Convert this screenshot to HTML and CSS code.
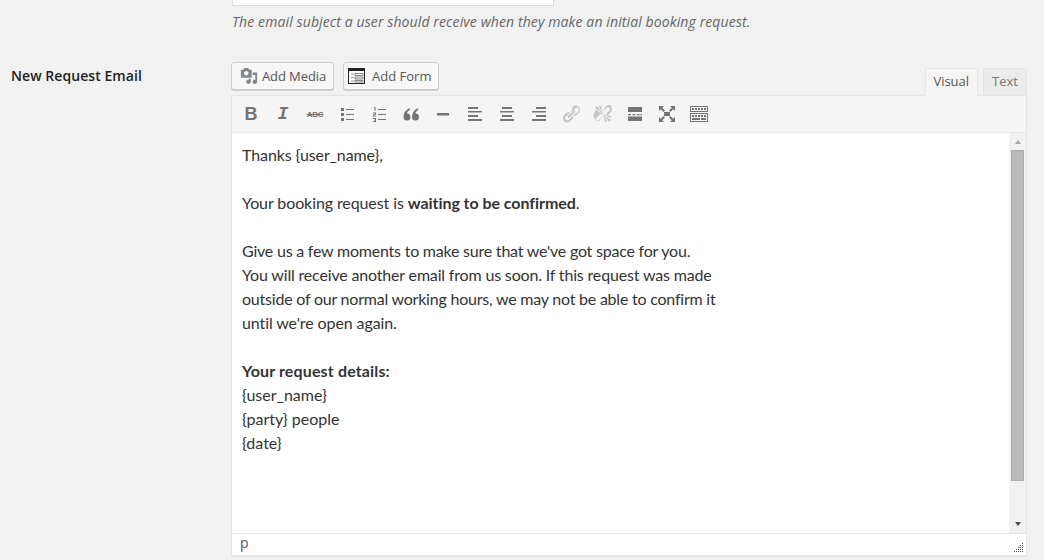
FILE: index.html
```html
<!DOCTYPE html>
<html lang="en">
<head>
<meta charset="utf-8">
<title>Booking settings</title>
<link rel="stylesheet" href="styles.css">
</head>
<body>
<div class="form">
  <div class="subject-field">
    <div class="subject-input"></div>
    <p class="description">The email subject a user should receive when they make an initial booking request.</p>
  </div>
  <div class="row">
    <div class="label">New Request Email</div>
    <div class="wrap">
      <div class="editor-head">
        <div class="media-buttons">
          <button class="button"><svg class="btn-icon" width="18" height="18" viewBox="0 0 20 20"><path fill-rule="evenodd" d="M13 11V4c0-.55-.45-1-1-1h-1.670L9 1H5L3.670 3H2c-.55 0-1 .45-1 1v7c0 .55.45 1 1 1h10c.55 0 1-.45 1-1zM7 4.500c1.380 0 2.500 1.120 2.500 2.500S8.380 9.500 7 9.500 4.500 8.380 4.500 7 5.620 4.500 7 4.500zM14 6h5v10.500c0 1.380-1.120 2.500-2.500 2.500S14 17.880 14 16.500s1.120-2.500 2.500-2.500c.17 0 .34.020.5.050V9h-3V6zm-4 8.050V13h2v3.500c0 1.380-1.120 2.500-2.500 2.500S7 17.880 7 16.500 8.120 14 9.500 14c.17 0 .34.020.5.050z"/></svg><span class="media-text">Add Media</span></button>
          <button class="button button-form"><svg class="form-icon" width="18" height="18" viewBox="0 0 18 18"><rect x="0.500" y="1.500" width="16" height="15" fill="#fafafa" stroke="#222"/><rect x="1" y="2" width="15" height="2" fill="#222"/><path d="M7 6.500h8v2H7zM7 10h8v2H7zM7 13.500h8v1.500H7z" fill="#fff" stroke="#555" stroke-width=".7"/><path d="M3 7h3M3 10.500h3M3 14h3" stroke="#999"/></svg><span>Add Form</span></button>
        </div>
        <div class="tabs">
          <div class="tab tab-active">Visual</div>
          <div class="tab">Text</div>
        </div>
      </div>
      <div class="editor">
        <div class="toolbar">
          <span class="tool tool-b">B</span>
          <span class="tool tool-i">I</span>
          <span class="tool tool-abc">ABC</span>
          <span class="tool"><svg class="ico" width="20" height="20" viewBox="0 0 20 20"><path d="M4 4h3v3H4zM4 9h3v3H4zM4 14h3v3H4zM9 5h8v1H9zM9 10h8v1H9zM9 15h8v1H9z"/></svg></span>
          <span class="tool"><svg class="ico" width="20" height="20" viewBox="0 0 20 20"><path d="M5 3h1.500v4h-1V4H5zM4 8.500h3v2.300H5v.700h2v1H4v-2.200h2v-.800H4zM4 14h3v4H4v-1h2v-.500H5v-.800h1V15H4zM9 5h8v1H9zM9 10h8v1H9zM9 15h8v1H9z"/></svg></span>
          <span class="tool"><svg class="ico" width="20" height="20" viewBox="0 0 20 20"><path d="M9.500 13a3.500 3.500 0 1 1-7 0C2.500 9 4.500 6 8.500 4.200L9 5.800C7 7 6 8.200 6 9.600A3.500 3.500 0 0 1 9.500 13zM18 13a3.500 3.500 0 1 1-7 0c0-4 2-7 6-8.800l.5 1.600c-2 1.200-3 2.400-3 3.800A3.500 3.500 0 0 1 18 13z"/></svg></span>
          <span class="tool"><svg class="ico" width="20" height="20" viewBox="0 0 20 20"><rect x="4" y="9" width="12" height="2.500"/></svg></span>
          <span class="tool"><svg class="ico" width="20" height="20" viewBox="0 0 20 20"><path d="M3 3h10v2H3zM3 7h14v1.500H3zM3 11h10v2H3zM3 15h14v2H3z"/></svg></span>
          <span class="tool"><svg class="ico" width="20" height="20" viewBox="0 0 20 20"><path d="M5 3h10v2H5zM3 7h14v1.500H3zM5 11h10v2H5zM3 15h14v2H3z"/></svg></span>
          <span class="tool"><svg class="ico" width="20" height="20" viewBox="0 0 20 20"><path d="M7 3h10v2H7zM3 7h14v1.500H3zM7 11h10v2H7zM3 15h14v2H3z"/></svg></span>
          <span class="tool"><svg class="ico-off" width="20" height="20" viewBox="0 0 20 20"><path d="M17.740 2.760c1.680 1.690 1.680 4.410 0 6.100l-1.530 1.520c-1.120 1.120-2.700 1.490-4.130 1.120l2.060-2.060c.34.030.68-.01.98-.14.3-.13.57-.3.79-.52l.76-.77.76-.76c.84-.84.84-2.200 0-3.040-.84-.85-2.200-.85-3.040 0l-.77.76-.76.76c-.22.23-.39.5-.52.8-.13.3-.17.64-.14.97l-2.060 2.060c-.37-1.420 0-3 1.120-4.130L11.640 2.760c1.690-1.680 4.410-1.680 6.100 0zM8.590 13.430l5.340-5.340c.42-.42.420-1.100 0-1.520-.44-.43-1.130-.39-1.530 0l-5.330 5.340c-.42.420-.42 1.100 0 1.520.44.430 1.130.39 1.520 0zm-.76 2.290l4.140-4.140c.38 1.430 0 3-1.120 4.140l-1.520 1.520c-1.690 1.690-4.410 1.690-6.100 0-1.690-1.680-1.690-4.400 0-6.100l1.520-1.520c1.130-1.120 2.700-1.490 4.140-1.120l-4.140 4.140c-.84.84-.84 2.200 0 3.040.84.84 2.200.84 3.040 0z"/></svg></span>
          <span class="tool"><svg class="ico-off" width="20" height="20" viewBox="0 0 20 20"><path d="M17.740 2.260c1.680 1.690 1.680 4.410 0 6.100l-1.530 1.520c-.32.33-.69.58-1.080.77L13 10l1.690-1.640.76-.77.76-.76c.84-.84.84-2.200 0-3.040-.84-.85-2.200-.85-3.040 0l-.77.76-.76.76L11 7l-.12-2.130c.19-.38.44-.76.77-1.080l1.520-1.530c1.690-1.680 4.410-1.680 6.100 0zM2 4l8 6-6-8zm4-2l4 8-2-8H6zM2 6l8 4-8-2V6zm7.360 7.690L10 10l.12 2.130c-.19.38-.44.76-.77 1.080l-1.520 1.530c-1.690 1.680-4.410 1.680-6.100 0-1.680-1.690-1.680-4.410 0-6.100l1.530-1.520c.32-.33.69-.58 1.080-.77L7 10l-1.690 1.640-.76.77-.76.76c-.84.84-.84 2.200 0 3.040.84.85 2.200.85 3.040 0zM18 16l-8-6 6 8zm-4 2l-4-8 2 8h2zm4-4l-8-4 8 2v2z"/></svg></span>
          <span class="tool"><svg class="ico" width="20" height="20" viewBox="0 0 20 20"><path d="M3 3h14v5H3zM3 10h3v1.200H3zM7.500 10h3v1.200h-3zM12 10h2.500v1.200H12zM15.500 10H17v1.200h-1.500zM3 12.500h14V17H3z"/></svg></span>
          <span class="tool"><svg class="ico" width="20" height="20" viewBox="0 0 20 20"><path d="M7 2H2v5l1.800-1.800L6.500 8 8 6.500 5.200 3.800 7 2zm6 0l1.800 1.800L12 6.500 13.500 8l2.700-2.800L18 7V2h-5zm.5 10L12 13.500l2.700 2.700L13 18h5v-5l-1.800 1.800-2.700-2.800zm-7 0l-2.700 2.700L2 13v5h5l-1.800-1.800L8 13.500 6.500 12z"/><rect x="7" y="8" width="6" height="4"/></svg></span>
          <span class="tool"><svg class="ico" width="20" height="20" viewBox="0 0 20 20"><path fill-rule="evenodd" d="M1 2h18v6H1zM2 3v4h16V3zM1 9h18v9H1zM2 10v7h16v-7z"/><path d="M3 4h2v2H3zM6 4h2v2H6zM9 4h2v2H9zM12 4h2v2h-2zM15 4h2v2h-2zM3 11h2v2H3zM6 11h2v2H6zM9 11h2v2H9zM12 11h2v2h-2zM15 11h2v2h-2zM3 14h8v2H3zM12 14h5v2h-5z"/></svg></span>
        </div>
        <div class="content-area">
          <div class="content">
            <p class="snug">Thanks {user_name},</p>
            <p class="snug">Your booking request is <strong class="strong-inline">waiting to be confirmed</strong>.</p>
            <p><span class="tight">Give us a few moments to make sure that we've got space for you.</span><br><span class="close">You will receive another email from us soon. If this request was made</span><br><span class="tight">outside of our normal working hours, we may not be able to confirm it</span><br><span class="snug">until we're open again.</span></p>
            <p><strong class="strong-wide">Your request details:</strong><br>{user_name}<br>{party} people<br>{date}</p>
          </div>
          <div class="scrollbar">
            <div class="arrow arrow-up"></div>
            <div class="thumb"></div>
            <div class="arrow arrow-down"></div>
          </div>
        </div>
        <div class="statusbar">
          <span>p</span>
          <svg class="grip" width="9" height="9" viewBox="0 0 9 9"><path d="M8 0h1v1H8zM8 2h1v1H8zM6 2h1v1H6zM8 4h1v1H8zM6 4h1v1H6zM4 4h1v1H4zM8 6h1v1H8zM6 6h1v1H6zM4 6h1v1H4zM2 6h1v1H2zM8 8h1v1H8zM6 8h1v1H6zM4 8h1v1H4zM2 8h1v1H2zM0 8h1v1H0z"/></svg>
        </div>
      </div>
    </div>
  </div>
</div>
</body>
</html>
```

FILE: styles.css
```css
* {
  box-sizing: border-box;
}

html,
body {
  margin: 0;
  height: 560px;
  overflow: hidden;
  background: #f1f1f1;
}

body {
  font-family: "Open Sans", sans-serif;
  color: #444;
}

.subject-field {
  margin-left: 232px;
}

.subject-input {
  width: 322px;
  height: 6px;
  background: #fff;
  border: 1px solid #ddd;
  border-top: 0;
}

.description {
  margin: 6px 0 0;
  font-size: 14px;
  line-height: 20px;
  font-style: italic;
  letter-spacing: 0.11px;
  color: #666;
}

.row {
  display: grid;
  grid-template-columns: 231px 796px;
  margin-top: 30px;
}

.label {
  padding: 4px 0 0 11px;
  font-size: 14px;
  line-height: 20px;
  font-weight: 600;
  letter-spacing: 0.06px;
  color: #222;
}

.editor-head {
  display: flex;
  justify-content: space-between;
  height: 33px;
}

.media-buttons {
  display: flex;
  gap: 9px;
}

.button {
  display: flex;
  align-items: center;
  gap: 4px;
  height: 28px;
  padding: 0 7px 0 8px;
  font: 13px/26px "Open Sans", sans-serif;
  color: #555;
  background: #f7f7f7;
  border: 1px solid #ccc;
  border-radius: 3px;
  box-shadow: 0 1px 0 #ccc;
}

.media-text {
  letter-spacing: -0.1px;
}

.button-form {
  gap: 6px;
  padding: 0 7px 0 4px;
}

.btn-icon {
  fill: #82878c;
}

.tabs {
  display: flex;
  gap: 5px;
  margin-top: 6px;
}

.tab {
  height: 28px;
  padding: 0 8px;
  font-size: 13px;
  line-height: 25px;
  color: #777;
  background: #ebebeb;
  border: 1px solid #e5e5e5;
  position: relative;
}

.tab-active {
  padding-left: 7px;
  color: #555;
  background: #f5f5f5;
  border-bottom-color: #f5f5f5;
}

.editor {
  background: #fff;
  border: 1px solid #e5e5e5;
  box-shadow: 0 1px 1px rgba(0, 0, 0, 0.04);
}

.toolbar {
  display: flex;
  height: 37px;
  padding-left: 3px;
  background: #f5f5f5;
  border-bottom: 1px solid #e5e5e5;
}

.tool {
  display: flex;
  flex: 0 0 32px;
  justify-content: center;
  align-items: center;
  height: 36px;
  color: #747474;
}

.tool-b {
  font: 700 18px "Liberation Sans", sans-serif;
}

.tool-i {
  font: italic 700 18px "Liberation Mono", monospace;
}

.tool-abc {
  font: 700 8px "Liberation Sans", sans-serif;
  letter-spacing: -0.3px;
  text-decoration: line-through;
}

.ico {
  fill: #747474;
}

.ico-off {
  fill: #c4c4c4;
}

.content-area {
  display: flex;
  height: 400px;
}

.content {
  flex: 1;
  padding: 10px;
  font-family: "Lato", sans-serif;
  font-size: 16px;
  line-height: 24px;
  color: #333;
}

.content p {
  margin: 0 0 24px;
}

.snug {
  letter-spacing: -0.1px;
}

.close {
  letter-spacing: -0.17px;
}

.tight {
  letter-spacing: -0.22px;
}

.strong-inline {
  letter-spacing: -0.05px;
}

.strong-wide {
  letter-spacing: 0.14px;
}

.scrollbar {
  display: flex;
  flex-direction: column;
  align-items: center;
  width: 17px;
  background: #f1f1f1;
}

.arrow {
  width: 0;
  height: 0;
  border-left: 3.500px solid transparent;
  border-right: 3.500px solid transparent;
}

.arrow-up {
  margin-top: 7px;
  border-bottom: 4px solid #a3a3a3;
}

.arrow-down {
  margin-top: 41px;
  border-top: 4px solid #505050;
}

.thumb {
  width: 13px;
  height: 331px;
  margin-top: 6px;
  background: #b9b9b9;
  border: 1px solid #ababab;
}

.statusbar {
  display: flex;
  justify-content: space-between;
  align-items: flex-end;
  height: 22px;
  padding: 0 3px 3px 8px;
  font-size: 14px;
  line-height: 19px;
  color: #555;
  border-top: 1px solid #e5e5e5;
}

.grip {
  fill: #444;
}
```
